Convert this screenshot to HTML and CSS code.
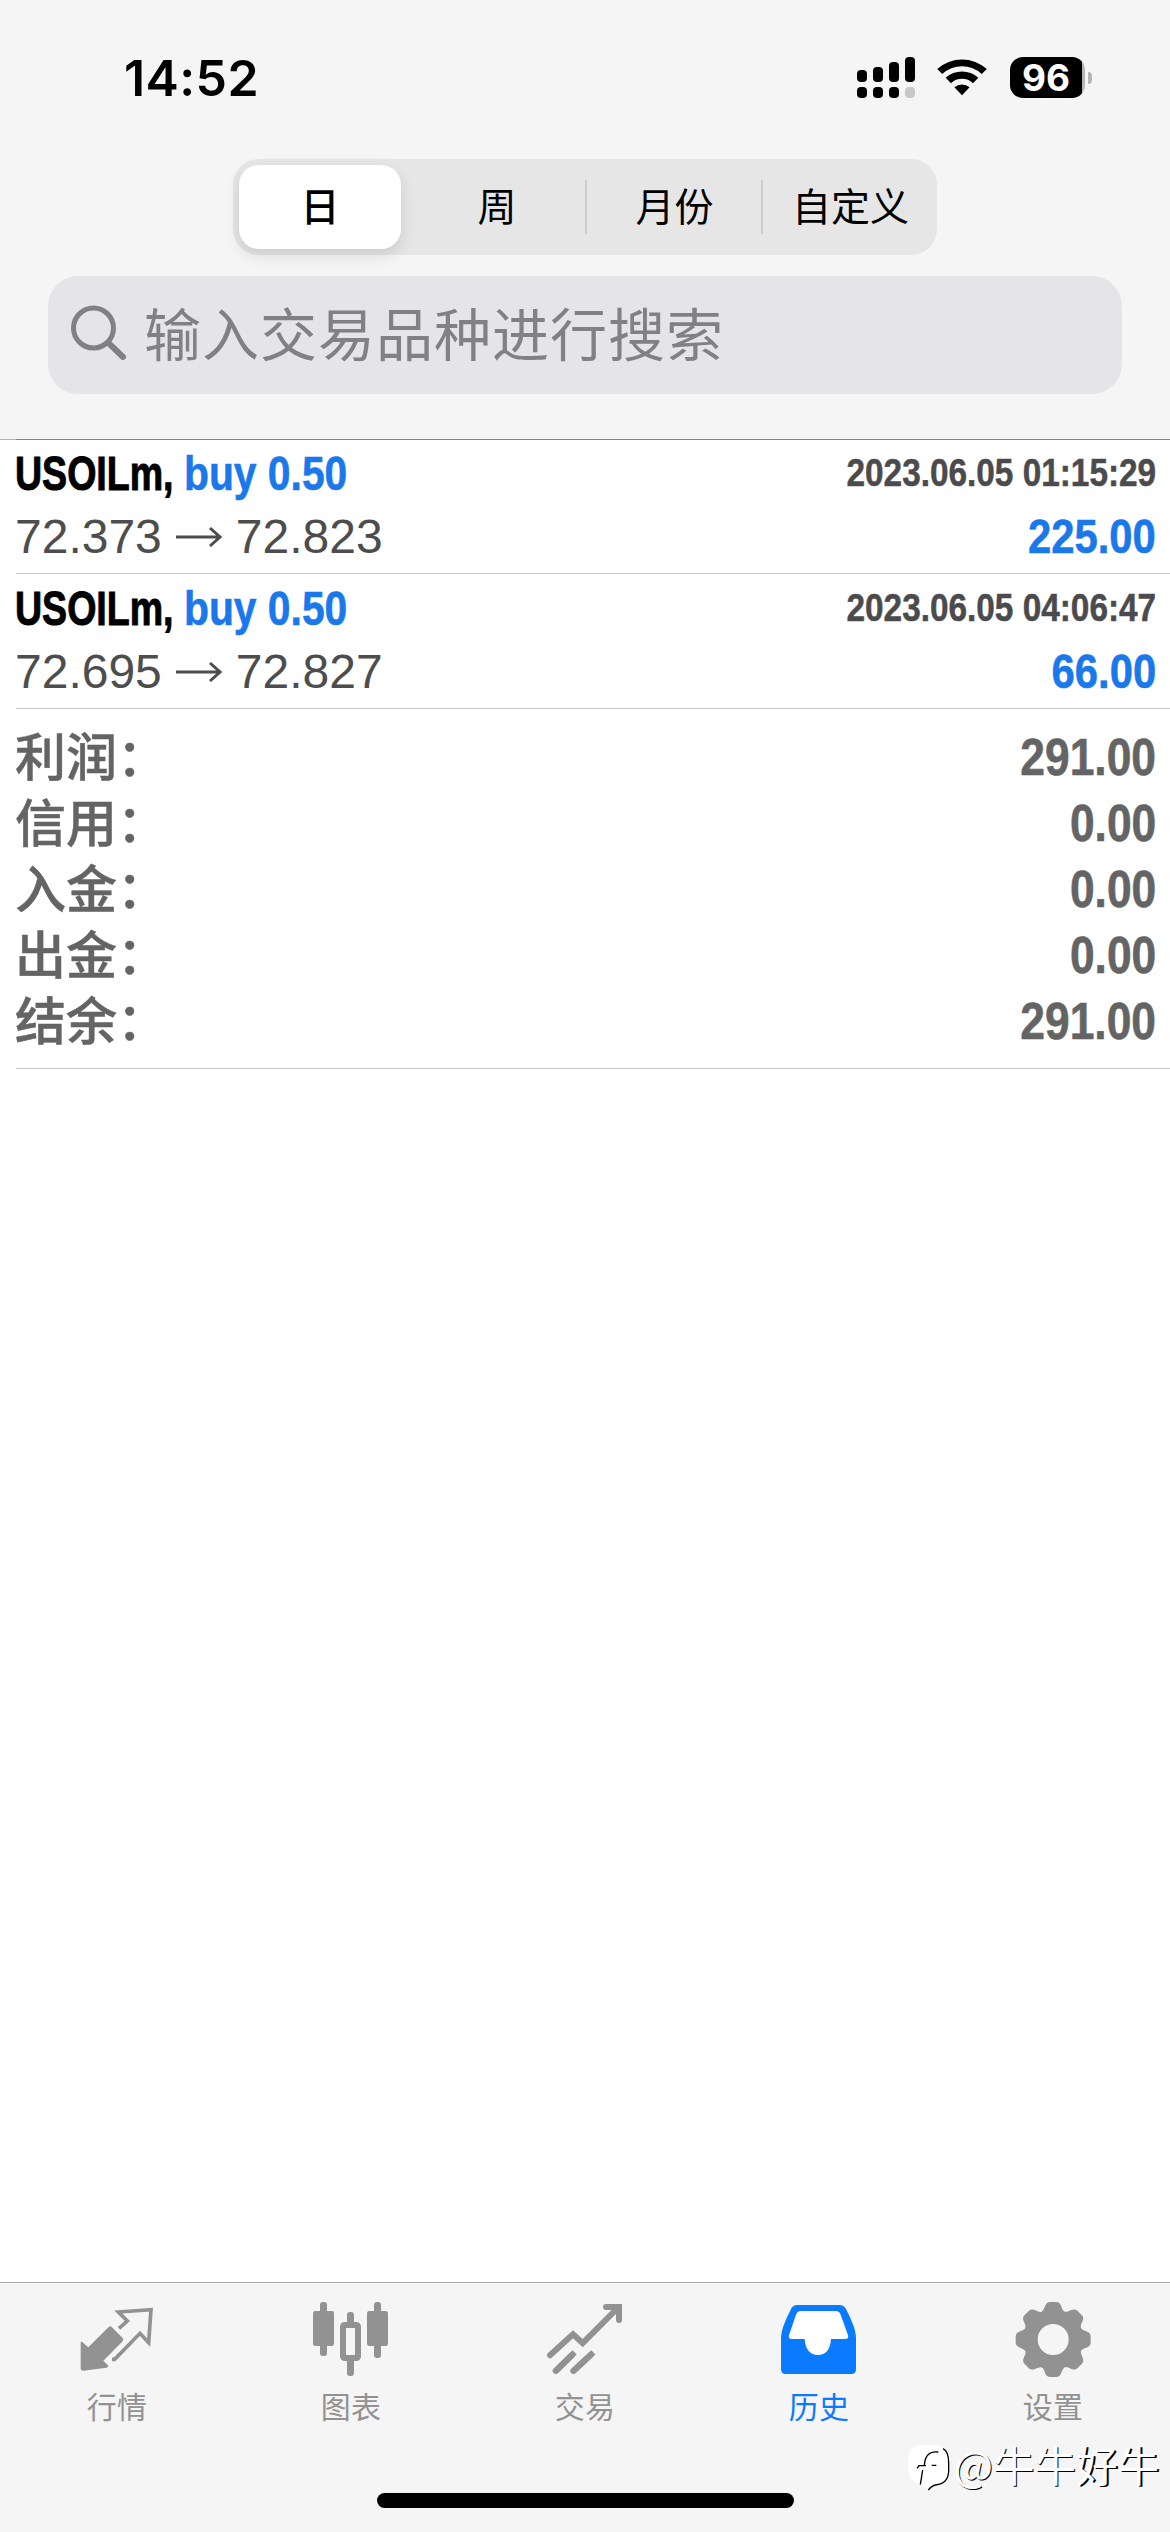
FILE: index.html
```html
<!DOCTYPE html>
<html lang="zh-CN">
<head>
    <meta charset="UTF-8">
    <meta name="viewport" content="width=device-width, initial-scale=1.0">
    <title>历史</title>
    <link rel="stylesheet" href="styles.css">
</head>
<body>
    <div class="app">
        <header class="header">
            <div class="status-bar">
                <span class="time">14:52</span>
                <div class="status-icons">
                    <svg class="signal" viewBox="0 0 58 41">
                        <rect x="0" y="13" width="10" height="12" rx="4"/>
                        <rect x="16" y="10" width="10" height="15" rx="4"/>
                        <rect x="32" y="5" width="10" height="20" rx="4"/>
                        <rect x="48" y="0" width="10" height="25" rx="4"/>
                        <rect x="0" y="30" width="10" height="11" rx="4"/>
                        <rect x="16" y="30" width="10" height="11" rx="4"/>
                        <rect x="32" y="30" width="10" height="11" rx="4"/>
                        <rect x="48" y="30" width="10" height="11" rx="4" fill="#c8c8c8"/>
                    </svg>
                    <svg class="wifi" viewBox="-26 -39 52 41">
                        <path d="M-24.8 -27A37 37 0 0 1 24.8 -27L19.8 -22A29 29 0 0 0 -19.8 -22Z"/>
                        <path d="M-16.3 -18.3A24.5 24.5 0 0 1 16.3 -18.3L11 -12.8A16 16 0 0 0 -11 -12.8Z"/>
                        <path d="M-7.6 -8.8A12 12 0 0 1 7.6 -8.8L0 -0.8Z"/>
                    </svg>
                    <div class="battery"><span class="battery-level">96</span></div>
                </div>
            </div>
            <div class="segmented">
                <button class="segment active">日</button>
                <button class="segment">周</button>
                <button class="segment divided">月份</button>
                <button class="segment divided">自定义</button>
            </div>
            <div class="search">
                <svg class="search-icon" viewBox="0 0 58 58">
                    <circle cx="23.500" cy="24" r="20"/>
                    <path d="M38.500 39L53 53" stroke-width="6"/>
                </svg>
                <span>输入交易品种进行搜索</span>
            </div>
        </header>

        <main class="content">
            <div class="deal">
                <div class="line">
                    <div class="title"><span class="symbol">USOILm,</span><span class="side">buy 0.50</span></div>
                    <span class="date">2023.06.05 01:15:29</span>
                </div>
                <div class="line">
                    <div class="prices">72.373<svg class="arrow" viewBox="0 0 46 22"><path d="M0 11H44M34 2L44 11L34 20"/></svg>72.823</div>
                    <span class="profit">225.00</span>
                </div>
            </div>
            <div class="deal">
                <div class="line">
                    <div class="title"><span class="symbol">USOILm,</span><span class="side">buy 0.50</span></div>
                    <span class="date">2023.06.05 04:06:47</span>
                </div>
                <div class="line">
                    <div class="prices">72.695<svg class="arrow" viewBox="0 0 46 22"><path d="M0 11H44M34 2L44 11L34 20"/></svg>72.827</div>
                    <span class="profit">66.00</span>
                </div>
            </div>
            <div class="summary">
                <div class="total"><span>利润：</span><b>291.00</b></div>
                <div class="total"><span>信用：</span><b>0.00</b></div>
                <div class="total"><span>入金：</span><b>0.00</b></div>
                <div class="total"><span>出金：</span><b>0.00</b></div>
                <div class="total"><span>结余：</span><b>291.00</b></div>
            </div>
        </main>

        <nav class="tabbar">
            <a class="tab">
                <svg viewBox="109 90 240 240">
                    <path d="M120 216Q124 214 128 219L143 232L204 171Q208 166 213 171L246 204Q250 209 246 214L188 272L202 286Q204 291 198 293L128 302Q120 302 120 296Z"/>
                    <path class="stroke" stroke-width="11" d="M235 175L260 153L233 126L331 119L324 218L298 190L222 268H214"/>
                </svg>
                <span>行情</span>
            </a>
            <a class="tab">
                <svg viewBox="813 90 240 240">
                    <rect x="840" y="96" width="21" height="162" rx="9"/>
                    <rect x="819" y="123" width="63" height="105" rx="7"/>
                    <rect x="1002" y="96" width="21" height="168" rx="9"/>
                    <rect x="981" y="123" width="63" height="105" rx="7"/>
                    <rect x="921" y="126" width="21" height="40" rx="9"/>
                    <rect x="921" y="262" width="21" height="56" rx="9"/>
                    <rect class="stroke" x="909" y="165" width="45" height="99" rx="5" stroke-width="18"/>
                </svg>
                <span>图表</span>
            </a>
            <a class="tab">
                <svg viewBox="135 90 240 240">
                    <g class="stroke" stroke-width="18" stroke-linecap="round">
                        <path d="M150 256L219 193L248 219L352 115M318 111H357V150"/>
                        <path d="M167 303L216 255M220 303L272 255"/>
                        <path stroke-linecap="butt" d="M167 303L224 247M220 303L280 247"/>
                    </g>
                </svg>
                <span>交易</span>
            </a>
            <a class="tab active">
                <svg viewBox="837 90 240 240">
                    <path fill="#fff" d="M890 115H1020L1055 215H855Z"/>
                    <path fill="#fff" d="M905 200H1000V262H905Z"/>
                    <path fill-rule="evenodd" d="M892 105H1018Q1032 105 1038 117Q1068 175 1068 202V298Q1068 312 1054 312H857Q843 312 843 298V202Q843 175 873 117Q879 105 892 105ZM903 123Q892 123 888 134L867 196Q864 207 875 207H914C916 239 931 255 954 255S991 239 993 207H1036Q1047 207 1044 196L1022 134Q1018 123 1007 123Z"/>
                </svg>
                <span>历史</span>
            </a>
            <a class="tab">
                <svg viewBox="397 90 240 240">
                    <defs>
                        <path id="tooth" d="M480 127Q488 124 493 109Q498 96 508 96H527Q537 96 542 109Q546 124 555 127L540 160H495Z"/>
                    </defs>
                    <circle class="stroke" cx="517.500" cy="208.500" r="66" stroke-width="39"/>
                    <use href="#tooth"/>
                    <use href="#tooth" transform="rotate(45 517.5 208.5)"/>
                    <use href="#tooth" transform="rotate(90 517.5 208.5)"/>
                    <use href="#tooth" transform="rotate(135 517.5 208.5)"/>
                    <use href="#tooth" transform="rotate(180 517.5 208.5)"/>
                    <use href="#tooth" transform="rotate(225 517.5 208.5)"/>
                    <use href="#tooth" transform="rotate(270 517.5 208.5)"/>
                    <use href="#tooth" transform="rotate(315 517.5 208.5)"/>
                </svg>
                <span>设置</span>
            </a>
        </nav>
        <div class="home-indicator"></div>

        <div class="watermark">
            <svg viewBox="80 525 132 147">
                <path class="blob" d="M112 532H176Q206 540 206 580V610Q206 650 165 651L145 665L118 651Q84 640 84 600V565Q86 540 112 532Z"/>
                <path d="M188 542Q205 550 205 585V610Q203 648 166 651Q154 653 144 666M174 552Q135 547 132 592M127 606L120 650M110 601L116 593H137M154 592H168"/>
            </svg>
            <span>@牛牛<b>好牛</b></span>
        </div>
    </div>
</body>
</html>
```

FILE: styles.css
```css
* {
    box-sizing: border-box;
}
body {
    margin: 0;
    background-color: #fff;
    font-family: "Liberation Sans", "Noto Sans CJK SC", sans-serif;
    color: #000;
}
.app {
    position: relative;
    display: flex;
    flex-direction: column;
    width: 1170px;
    height: 2532px;
    overflow: hidden;
}

/* Header */
.header {
    height: 440px;
    background-color: #f5f5f5;
    border-bottom: 1px solid #b4b4b4;
}
.status-bar {
    display: flex;
    justify-content: space-between;
    height: 159px;
    padding: 57px 78px 0 124px;
}
.time {
    font: 600 50px/42px Inter, sans-serif;
    letter-spacing: 0.4px;
}
.status-icons {
    display: flex;
    align-items: flex-start;
}
.signal {
    width: 58px;
    height: 41px;
    margin-right: 21px;
}
.wifi {
    width: 52px;
    height: 41px;
    margin-right: 22px;
}
.battery {
    display: flex;
    align-items: center;
    width: 82px;
}
.battery-level {
    width: 75px;
    height: 41px;
    padding-right: 3px;
    border-radius: 13px;
    background: linear-gradient(to right, #000 72px, #b5b5b5 72px);
    color: #fff;
    font: 700 37px/42px Inter, sans-serif;
    text-align: center;
}
.battery::after {
    content: "";
    width: 4px;
    height: 12px;
    margin-left: 3px;
    border-radius: 0 4px 4px 0;
    background-color: #b5b5b5;
}
.segmented {
    display: flex;
    width: 704px;
    height: 96px;
    margin: 0 0 0 233px;
    border-radius: 26px;
    background-color: #e6e6e7;
}
.segment {
    display: flex;
    align-items: center;
    justify-content: center;
    width: 176px;
    padding: 0 0 7px;
    border: none;
    background: none;
    font: 400 39px "Noto Sans CJK SC", sans-serif;
    color: #000;
}
.segment.active {
    width: 162px;
    height: 84px;
    margin: 6px 8px 0 6px;
    padding-bottom: 6px;
    border-radius: 20px;
    background-color: #fff;
    box-shadow: 0 6px 16px rgba(0,0,0,0.12);
    font-weight: 500;
}
.segment.divided {
    padding-left: 3px;
    background: linear-gradient(#cdcdcf, #cdcdcf) 0 21px / 2px 54px no-repeat;
}
.search {
    display: flex;
    align-items: center;
    width: 1074px;
    height: 118px;
    margin: 21px 0 0 48px;
    padding: 0 0 4px 22px;
    border-radius: 30px;
    background-color: #e5e5e7;
    color: #818183;
    font: 400 57px/1 "Noto Sans CJK SC", sans-serif;
    letter-spacing: 1px;
}
.search span {
    padding-bottom: 3px;
}
.search-icon {
    width: 58px;
    height: 58px;
    margin-right: 16px;
    fill: none;
    stroke: #818183;
    stroke-width: 5;
    stroke-linecap: round;
}

/* Deals */
.content {
    flex: 1;
    padding-left: 16px;
    margin-top: -1px;
}
.deal {
    height: 135px;
    padding: 3px 14px 0 0;
    border-bottom: 1px solid #c6c6c8;
}
.deal:first-child {
    border-top: 1px solid #858585;
    padding-top: 2px;
}
.line {
    display: flex;
    justify-content: space-between;
    height: 63px;
    margin-left: -1px;
    font-size: 48px;
    line-height: 63px;
    white-space: nowrap;
}
.title {
    display: flex;
    font-weight: bold;
}
/* condensed faces are made by squeezing the regular bold */
.symbol {
    width: 169px;
    transform: scaleX(0.782);
    transform-origin: left;
    -webkit-text-stroke: 1px;
}
.side {
    color: #1a78ea;
    transform: scaleX(0.85);
    transform-origin: left;
    -webkit-text-stroke: 0.6px;
}
.date {
    color: #4b4b4d;
    font-size: 39px;
    font-weight: bold;
    line-height: 61px;
    transform: scaleX(0.855);
    transform-origin: right;
    -webkit-text-stroke: 0.5px;
}
.prices {
    display: flex;
    align-items: center;
    color: #4d4d4d;
}
.arrow {
    width: 46px;
    height: 22px;
    margin: 0 14px 0 14px;
    fill: none;
    stroke: #4d4d4d;
    stroke-width: 3;
}
.profit {
    color: #1a78ea;
    font-weight: bold;
    transform: scaleX(0.87);
    transform-origin: right;
    -webkit-text-stroke: 0.6px;
}

/* Totals */
.summary {
    height: 360px;
    padding: 15px 14px 0 0;
    border-bottom: 1px solid #c6c6c8;
    color: #646464;
}
.total {
    display: flex;
    justify-content: space-between;
    height: 66px;
    margin-left: -1px;
    line-height: 66px;
    font-size: 51px;
}
.total span {
    font-family: "Noto Sans CJK SC", sans-serif;
    font-weight: 500;
    line-height: 60px;
    -webkit-text-stroke: 0.5px;
}
.total b {
    line-height: 68px;
    transform: scaleX(0.87);
    transform-origin: right;
    -webkit-text-stroke: 0.6px;
}

/* Tab bar */
.tabbar {
    display: flex;
    height: 250px;
    border-top: 1px solid #a9a9a9;
    background-color: #f5f5f5;
}
.tab {
    display: flex;
    flex-direction: column;
    align-items: center;
    width: 234px;
    padding-top: 17px;
    color: #929292;
    font: 400 30px/44px "Noto Sans CJK SC", sans-serif;
    letter-spacing: 0.2px;
}
.tab svg {
    width: 80px;
    height: 80px;
    margin-bottom: 3px;
    fill: currentColor;
}
.tab .stroke {
    fill: none;
    stroke: currentColor;
}
.tab.active {
    color: #0a7aff;
}
.home-indicator {
    position: absolute;
    left: 377px;
    bottom: 24px;
    width: 417px;
    height: 15px;
    border-radius: 8px;
    background-color: #000;
}
.watermark {
    position: absolute;
    right: 11px;
    bottom: 40px;
    display: flex;
    align-items: center;
    color: #fff;
    font: 400 41.500px/56px "Noto Sans CJK SC", sans-serif;
    text-shadow: 1px 1px 0 #000;
}
.watermark svg {
    width: 44px;
    height: 49px;
    margin: 6px 3px 0 0;
    fill: none;
    stroke: #000;
    stroke-width: 4;
}
.watermark .blob {
    fill: #fff;
    stroke: none;
}
.watermark b {
    font-weight: 400;
    text-shadow: 2px 1px 0 #000;
}
```
